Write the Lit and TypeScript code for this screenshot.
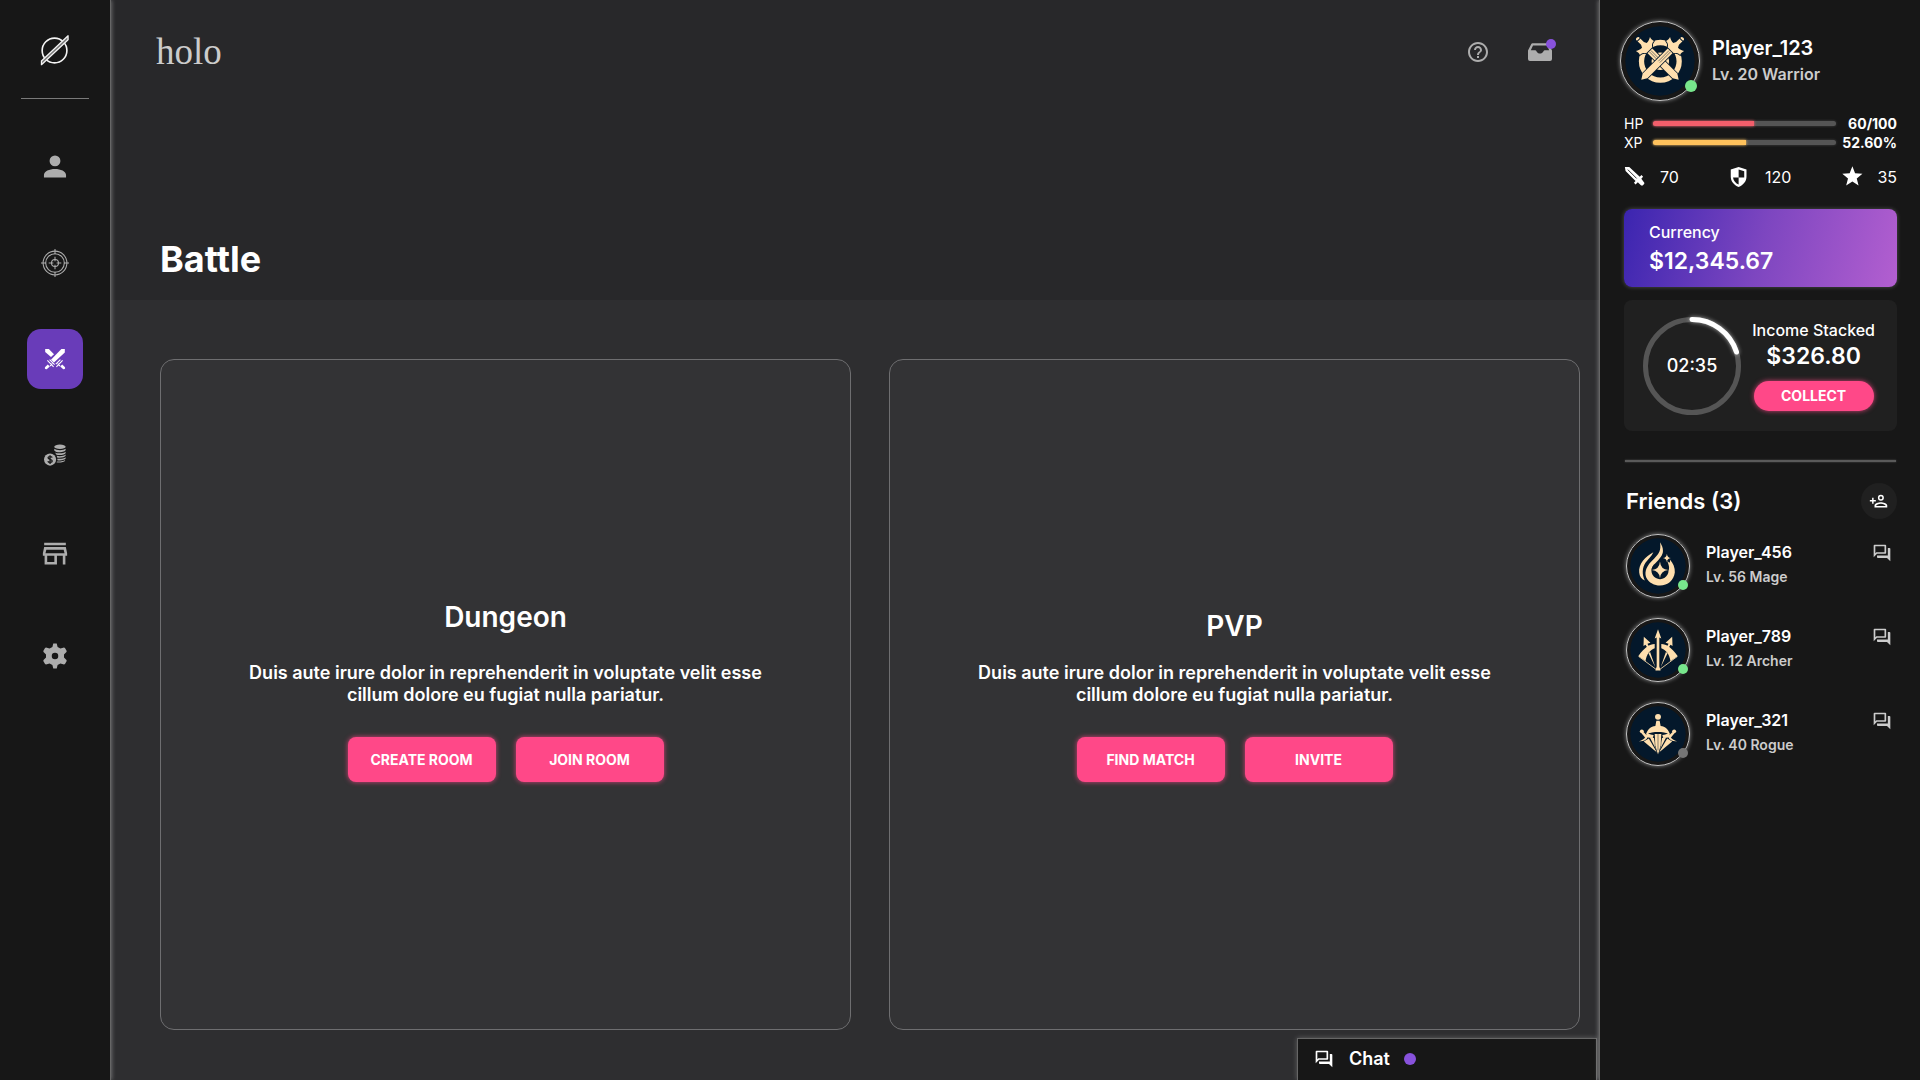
import { LitElement, html, css, svg, SVGTemplateResult } from "lit";
import { customElement, property } from "lit/decorators.js";
import { classMap } from "lit/directives/class-map.js";
import { styleMap } from "lit/directives/style-map.js";

/* ---------- icons (24 unit grid) ---------- */

const icons: Record<string, SVGTemplateResult> = {
  person: svg`<path d="M12 11.4a5 5 0 1 0 0-10 5 5 0 0 0 0 10zM1.8 21.6v-2.2c0-3.6 5-5.6 10.2-5.6s10.2 2 10.2 5.6v2.2z"/>`,
  target: svg`<g fill="none" stroke="currentColor" stroke-width=".9">
    <circle cx="12" cy="12" r="10.2"/><circle cx="12" cy="12" r="8"/><circle cx="12" cy="12" r="3"/>
    <path d="M12 0v4.4M12 19.6V24M0 12h4.4M19.6 12H24M12 6.6v4M12 13.4v4M6.6 12h4M13.4 12h4"/></g>`,
  swords: svg`<path d="M21.8 2v3.6L11 15.6 8 12.8 18.4 2z"/><path d="M2.2 2h3.6l5.2 5.2-3 2.8-5.8-5z"/>
    <path d="M2.2 20l2.6-2.6 2 2-2.8 2.6c-1.6.8-2.8-.6-1.8-2zM21.8 20l-2.6-2.6-2 2 2.8 2.6c1.6.8 2.8-.6 1.8-2z"/>
    <path d="M4.4 13.4l6.2 6.4M6.6 12.6l5 5M7 19l2.4-2.4M19.6 13.4l-6.2 6.4M17.4 12.6l-4.6 4.6M17 19l-2.4-2.4" fill="none" stroke="currentColor" stroke-width="1.1"/>`,
  coins: svg`<ellipse cx="17.4" cy="3" rx="6.2" ry="2.5"/>
    <path d="M11.2 5.2c2 2 10.4 2 12.4 0v1.4c-.6 2.8-10.4 3.4-12.4.4zM12 9.2c3 1.6 9.6 1.2 11.6-.8v1.4c-.6 2-6.4 3-10 1.8zM13.8 12.9c3.6.8 8 .2 9.8-1.4v1.4c-.8 1.6-5.4 2.6-9 2zM14.6 16.1c3.2.4 7.4-.2 9-1.6v1.4c-.8 1.6-5.2 2.4-9 1.8zM14.2 19c3.4.2 7.4-.4 8.8-1.6v.8c-.8 1.6-5.6 2.4-9.4 1.8z"/>
    <circle cx="6.6" cy="17" r="6.6"/>
    <path d="M9 14.8c-.6-1.4-4.6-1.6-4.6.3 0 2.2 4.6 1.2 4.6 3.5 0 2-4.2 2-4.8.2M6.6 12.2v9.6" fill="none" stroke="#171717" stroke-width="1.4"/>`,
  store: svg`<path d="M2 1.6h20v2.4H2zM2 5.6h20l1.2 5.8v2.2h-1.6v8.2h-2.4v-8.2h-5.4v8.2H2.4v-8.2H.8v-2.2zm2 2.4-.8 3.4h17.6L20 8zm.8 5.6v5.8h6.6v-5.8z" fill-rule="evenodd"/>`,
  gear: svg`<path d="M10.4.4h3.2l.8 3.2 2.6 1.5 3.3-1 .9.5 1.6 2.8-.2 1-2.3 2.2v2.8l2.3 2.2.2 1-1.6 2.8-.9.5-3.3-1-2.6 1.5-.8 3.2h-3.2l-.8-3.2L7 18.900l-3.300 1-.9-.5-1.600-2.800.2-1 2.300-2.200v-2.800L1.400 8.400l-.2-1 1.600-2.800.9-.5 3.300 1 2.600-1.500zM12 9a3 3 0 1 0 0 6 3 3 0 0 0 0-6z" fill-rule="evenodd"/>`,
  help: svg`<path d="M11 18h2v-2h-2v2zm1-16C6.480 2 2 6.480 2 12s4.480 10 10 10 10-4.480 10-10S17.520 2 12 2zm0 18c-4.410 0-8-3.590-8-8s3.590-8 8-8 8 3.590 8 8-3.590 8-8 8zm0-14c-2.210 0-4 1.790-4 4h2c0-1.100.9-2 2-2s2 .9 2 2c0 2-3 1.750-3 5h2c0-2.250 3-2.500 3-5 0-2.210-1.790-4-4-4z"/>`,
  inbox: svg`<path d="M4.400 3.200h15.200l1 .5L24 10.600v8.400a2 2 0 0 1-2 2H2a2 2 0 0 1-2-2v-8.400l3.400-6.900zM5 5.400l-2.200 4.800h4.600c1.200 0 1.300 3.400 4.600 3.400s3.400-3.400 4.600-3.400h4.600L19 5.400z" fill-rule="evenodd"/>`,
  sword: svg`<path d="M1 1h5l12 11.400 2-2 1.800 1.800-2 2.400 3.400 4.400v1.400l-1.800 1.800h-1.800l-3.800-3.600-2.600 2.400-1.800-1.800 1.800-2L1.800 5.600z"/><path d="M4.400 4.200l10 10" fill="none" stroke="#171717"/>`,
  shield: svg`<path d="M11 1 20 4v8c0 5.600-3.600 9.800-9 12-5.400-2.200-9-6.400-9-12V4zm0 3v9H4.600c.6 4 3 6.600 6.400 8.200V13h6.400V6z" fill-rule="evenodd"/>`,
  star: svg`<path d="M13 .4l3.100 7.900 8.400.5-6.500 5.400 2.100 8.200L13 17.800 5.900 22.400 8 14.200 1.500 8.800l8.400-.5z"/>`,
  addFriend: svg`<path d="M14.500 3.500a4 4 0 1 0 0 8 4 4 0 0 0 0-8zm0 2a2 2 0 1 1 0 4 2 2 0 0 1 0-4zM14.500 13.500c-2.900 0-8.500 1.400-8.500 4.200v2.800h17v-2.800c0-2.800-5.600-4.200-8.500-4.200zm-6.400 5c.2-1 3.300-3 6.400-3s6.200 2 6.400 3zM4.800 7.500h-2v3h-3v2h3v3h2v-3h3v-2h-3z"/>`,
  chat: svg`<path d="M15 4v7H5.170L4 12.170V4h11m1-2H3c-.55 0-1 .45-1 1v14l4-4h10c.55 0 1-.45 1-1V3c0-.55-.45-1-1-1zm5 4h-2v9H6v2c0 .55.45 1 1 1h11l4 4V7c0-.55-.45-1-1-1z"/>`,
  logo: svg`<circle cx="11.600" cy="12.400" r="10.600" fill="none" stroke="currentColor" stroke-width="1.400"/>
    <path d="M.4 24.600v-3.400L23.200-.200v3.600z" fill="#777"/><path d="M.4 21.400 23.200-.200M.4 24.600 23.200 3.200M.4 21v4M23.200-.600v4" fill="none" stroke="currentColor" stroke-width="1.100"/>`,
};

/* ---------- class crests (origin at the centre of the avatar) ---------- */

const blade = svg`
  <path d="M-10-54h20v118L0 80-10 64z"/>
  <path d="M-6-97q6-6 12 0v22l4 8c8 0 13-2 20-6-2 7-2 12 0 17-8 0-13 3-17 10h-26c-4-7-9-10-17-10 2-5 2-10 0-17 7 4 12 6 20 6l4-8z"/>
  <path d="M-7-91h14" fill="none" stroke="#04182b" stroke-width="3"/>
  <path d="M-3-42v46M3-42v46" fill="none" stroke="#04182b" stroke-width="1.500"/>`;

const fan = svg`
  <circle cx="-49" cy="-8" r="6"/>
  <path d="M-50-2l6-4 12 12-6 6z"/>
  <path d="M-58 22c8-2 12-4 17-9s7-12 8-18c4 6 12 8 20 8l-3 9c-8-1-14-2-17-1 0 5-9 11-25 11z"/>
  <path d="M-43 23l15-9L-3 56z"/><path d="M-25 10l13 2L-2 54z"/>`;

const crests: Record<string, SVGTemplateResult> = {
  warrior: svg`
    <circle cx="1" cy="1" r="57" fill="none" stroke="#ffdfae" stroke-width="16"/>
    <circle cx="1" cy="1" r="22" fill="none" stroke="#ffdfae" stroke-width="9" stroke-dasharray="24 10.500" stroke-dashoffset="12"/>
    <g stroke="#04182b" stroke-width="5" paint-order="stroke">
      <g transform="rotate(-45)">${blade}</g><g transform="rotate(45)">${blade}</g>
    </g>`,
  mage: svg`
    <path d="M6-72C10-48 4-38-12-22-34-2-42 16-36 34-28 52-10 59 6 59 30 59 48 44 51 20 52 4 46-8 36-20 38-8 34-8 28-16 32-4 36 4 32 14A26 26 0 1 1-8-8C4-20 16-34 15-46 15-56 12-62 6-72z"/>
    <path d="M-14-42C-38-30-60-6-57 20-56 32-50 40-40 44-49 24-48 6-38-10-30-22-20-28-14-42z"/>
    <path d="M6-14q2 24 25 26-23 2-25 25-2-23-25-25 23-2 25-26zM27-37q1 12 12 13-11 1-12 13-1-12-12-13 11-1 12-13z"/>`,
  archer: svg`
    <path d="M0-63 10-35 4-38 4 50 8 62H-8L-4 50-4-38-10-35z"/>
    ${[-1, 1].map(
      (side) => svg`<g transform="scale(${side} 1)">
        <path d="M43-40 44-12 38-16 32-7 27-10 32-19 23-22z"/>
        <path d="M10-18C26-18 40-8 60 19 52 23 46 28 38 34 34 12 24 0 10-5z"/>
        <path d="M24 6 29 10 8 52z"/>
        <path d="M58 20 4 60" fill="none" stroke="#ffdfae" stroke-width="2.500"/>
      </g>`
    )}`,
  rogue: svg`
    <g>${fan}</g><g transform="scale(-1 1)">${fan}</g>
    <path d="M-10 0H10L8 36 0 62-8 36z" stroke="#04182b" stroke-width="3" paint-order="stroke"/>
    <path d="M0-10V50" fill="none" stroke="#04182b" stroke-width="1.500"/>
    <circle cy="-52" r="9"/>
    <path d="M-5-40H5L8-24C22-24 32-12 37 2 24-5 12-6 0-6S-24-5-37 2C-32-12-22-24-8-24z"/>`,
};

@customElement("ui-icon")
class UiIcon extends LitElement {
  @property() name = "";
  static styles = css`
    :host {
      display: inline-flex;
      flex: none;
      width: var(--icon-size, 24px);
      height: var(--icon-size, 24px);
    }
    .icon {
      width: 100%;
      height: 100%;
      fill: currentColor;
      overflow: visible;
    }
  `;
  render() {
    return html`<svg class="icon" viewBox="0 0 24 24" aria-hidden="true">${icons[this.name]}</svg>`;
  }
}

@customElement("player-avatar")
class PlayerAvatar extends LitElement {
  @property() crest = "";
  @property({ type: Boolean }) online = false;
  static styles = css`
    :host {
      display: block;
      position: relative;
      flex: none;
      width: var(--avatar-size, 64px);
      height: var(--avatar-size, 64px);
    }
    .disc {
      display: block;
      box-sizing: border-box;
      width: 100%;
      height: 100%;
      border: 1px solid #c4c4c4;
      border-radius: 50%;
      box-shadow: 0 0 4px rgba(255, 255, 255, 0.5);
    }
    .field {
      fill: #04182b;
    }
    .art {
      fill: #ffdfae;
    }
    .dot {
      position: absolute;
      right: var(--dot-right, 2px);
      bottom: var(--dot-bottom, 8px);
      width: var(--dot-size, 10px);
      height: var(--dot-size, 10px);
      border-radius: 50%;
      background: #757575;
    }
    .online {
      background: #78e68c;
    }
  `;
  render() {
    const box = this.crest === "warrior" ? "-118 -118 236 236" : "-94 -94 188 188";
    const field = this.crest === "warrior" ? 105 : 84;
    return html`
      <svg class="disc" viewBox=${box} aria-hidden="true">
        <circle class="field" r=${field}></circle>
        <g class="art">${crests[this.crest]}</g>
      </svg>
      <span class=${classMap({ dot: true, online: this.online })}></span>
    `;
  }
}

const nav = [
  { icon: "person", label: "Profile" },
  { icon: "target", label: "Missions" },
  { icon: "swords", label: "Battle", active: true },
  { icon: "coins", label: "Income" },
  { icon: "store", label: "Store", tall: true },
  { icon: "gear", label: "Settings", tall: true },
];

const modes = [
  { title: "Dungeon", low: false, actions: ["CREATE ROOM", "JOIN ROOM"] },
  { title: "PVP", low: true, actions: ["FIND MATCH", "INVITE"] },
];

const bars = [
  { name: "HP", value: "60/100", fill: 55, color: "#f25e6b" },
  { name: "XP", value: "52.60%", fill: 51, color: "#ffc25c" },
];

const stats = [
  { icon: "sword", value: 70 },
  { icon: "shield", value: 120 },
  { icon: "star", value: 35 },
];

const friends = [
  { name: "Player_456", info: "Lv. 56 Mage", crest: "mage", online: true },
  { name: "Player_789", info: "Lv. 12 Archer", crest: "archer", online: true },
  { name: "Player_321", info: "Lv. 40 Rogue", crest: "rogue", online: false },
];

@customElement("app-root")
class AppRoot extends LitElement {
  static styles = css`
    :host {
      display: grid;
      grid-template-columns: 111px minmax(0, 1fr) 321px;
      min-height: 100vh;
      background: #171717;
      color: #fff;
      font-family: Inter, "Liberation Sans", sans-serif;
      font-size: 16px;
      font-weight: 500;
      line-height: 20px;
    }
    * {
      box-sizing: border-box;
    }
    h1,
    h2,
    p,
    ul {
      margin: 0;
      padding: 0;
    }
    button {
      display: flex;
      align-items: center;
      justify-content: center;
      padding: 0;
      border: 0;
      background: none;
      color: inherit;
      font: inherit;
      cursor: pointer;
    }

    /* left rail */
    .rail {
      display: flex;
      flex-direction: column;
      align-items: center;
      z-index: 1;
      border-right: 1px solid #666;
      box-shadow: 1px 0 4px rgba(255, 255, 255, 0.3);
      background: #171717;
    }
    .brand {
      display: flex;
      justify-content: center;
      width: 68px;
      height: 99px;
      padding-top: 36px;
      border-bottom: 1px solid #7a7a7a;
      color: #f4f4f4;
      --icon-size: 28px;
    }
    .nav {
      display: flex;
      flex-direction: column;
      gap: 36px;
      margin-top: 38px;
    }
    .nav-link {
      display: flex;
      align-items: center;
      justify-content: center;
      width: 56px;
      height: 60px;
      border-radius: 14px;
      color: #adadad;
      --icon-size: 26px;
    }
    .nav-link.tall {
      height: 66px;
    }
    .nav-link.target {
      --icon-size: 28px;
    }
    .nav-link.coins {
      --icon-size: 22px;
    }
    .nav-link.active {
      background: #693cb9;
      color: #fff;
      --icon-size: 24px;
    }

    /* centre */
    .main {
      display: flex;
      flex-direction: column;
      position: relative;
      background: #2e2e30;
    }
    .hero {
      display: flex;
      flex-direction: column;
      justify-content: space-between;
      height: 300px;
      padding: 32px 47px 20px 45px;
      background: #28282a;
    }
    .topbar {
      display: flex;
      align-items: center;
      justify-content: space-between;
    }
    .wordmark {
      color: #ccc;
      font-family: "Liberation Serif", serif;
      font-size: 37px;
      font-weight: 400;
      line-height: 40px;
      text-decoration: none;
    }
    .tools {
      display: flex;
      gap: 38px;
      color: #adadad;
    }
    .inbox {
      position: relative;
    }
    .alert {
      position: absolute;
      top: -1px;
      right: -4px;
      width: 10px;
      height: 10px;
      border-radius: 50%;
      background: #8852dc;
    }
    .title {
      padding-left: 4px;
      font-size: 36px;
      font-weight: 700;
      line-height: 42px;
    }
    .modes {
      display: grid;
      flex: 1;
      grid-template-columns: 1fr 1fr;
      gap: 38px;
      padding: 59px 19px 50px 49px;
    }
    .mode {
      display: flex;
      flex-direction: column;
      align-items: center;
      justify-content: center;
      padding: 0 40px 8px;
      border: 1px solid #6e6e70;
      border-radius: 14px;
      background: #333335;
      text-align: center;
    }
    .mode-title {
      padding-bottom: 27px;
      font-size: 28px;
      font-weight: 600;
      line-height: 36px;
    }
    .mode-title.low {
      padding: 9px 0 18px;
    }
    .mode-text {
      max-width: 540px;
      font-size: 18px;
      font-weight: 600;
      line-height: 22px;
    }
    .actions {
      display: flex;
      gap: 20px;
      margin-top: 31px;
    }
    .action {
      background: #ff4888;
      font-size: 14px;
      font-weight: 700;
      box-shadow: 0 0 5px rgba(255, 72, 136, 0.8);
    }
    .actions .action {
      width: 148px;
      height: 45px;
      border-radius: 8px;
    }
    .chat {
      display: flex;
      align-items: center;
      justify-content: flex-start;
      position: absolute;
      right: 2px;
      bottom: 0;
      width: 300px;
      height: 42px;
      padding: 0 0 2px 16px;
      border: 1px solid #666;
      border-bottom: 0;
      box-shadow: 0 0 5px rgba(255, 255, 255, 0.25);
      background: #171717;
      font-size: 18px;
      --icon-size: 20px;
    }
    .chat-label {
      margin: 0 14px 0 15px;
      font-weight: 600;
    }
    .chat-dot {
      width: 12px;
      height: 12px;
      border-radius: 50%;
      background: #8852dc;
    }

    /* right panel */
    .panel {
      display: flex;
      flex-direction: column;
      z-index: 1;
      padding: 21px 23px 0 24px;
      border-left: 1px solid #666;
      box-shadow: -1px 0 4px rgba(255, 255, 255, 0.3);
      background: #171717;
    }
    .profile {
      display: flex;
      align-items: center;
      gap: 12px;
      margin-left: -4px;
      --avatar-size: 80px;
      --dot-size: 12px;
      --dot-right: 3px;
      --dot-bottom: 9px;
    }
    .profile-name {
      font-size: 20px;
      font-weight: 600;
      line-height: 26px;
    }
    .profile-info {
      color: #ccc;
      font-weight: 600;
      line-height: 26px;
    }
    .bars {
      display: grid;
      margin-top: 13px;
      font-size: 14px;
      font-weight: 400;
      line-height: 19px;
    }
    .bar-row {
      display: grid;
      grid-template-columns: 29px 183px 1fr;
      align-items: center;
    }
    .track {
      height: 5px;
      border-radius: 3px;
      background: #555;
      box-shadow: 0 0 3px rgba(255, 255, 255, 0.2);
    }
    .fill {
      height: 5px;
      border-radius: 3px 0 0 3px;
    }
    .bar-value {
      font-weight: 700;
      text-align: right;
    }
    .stats {
      display: flex;
      justify-content: space-between;
      margin-top: 14px;
      --icon-size: 21px;
    }
    .stat {
      display: flex;
      align-items: center;
      gap: 15px;
      font-weight: 400;
    }
    .currency {
      margin-top: 22px;
      padding: 13px 25px 12px;
      border-radius: 8px;
      background: linear-gradient(105deg, #3b25b0, #7d46c0 50%, #b35fd0);
      box-shadow: 0 0 4px rgba(255, 255, 255, 0.25);
    }
    .amount {
      font-size: 23px;
      font-weight: 600;
      line-height: 28px;
    }
    .currency .amount {
      padding-top: 5px;
    }
    .income {
      display: flex;
      align-items: center;
      justify-content: space-between;
      margin-top: 13px;
      padding: 17px 22px 16px 19px;
      border-radius: 8px;
      background: #202020;
    }
    .timer {
      display: grid;
      place-items: center;
      font-size: 18px;
    }
    .timer > * {
      grid-area: 1 / 1;
    }
    .ring {
      width: 98px;
      height: 98px;
      fill: none;
      stroke: #555;
      stroke-width: 5;
      overflow: visible;
    }
    .arc {
      stroke: #fff;
      stroke-linecap: round;
      filter: drop-shadow(0 0 2px rgba(255, 255, 255, 0.6));
    }
    .collect {
      display: flex;
      flex-direction: column;
      align-items: center;
      padding-bottom: 2px;
    }
    .collect .amount {
      padding-top: 2px;
    }
    .collect .action {
      width: 120px;
      height: 30px;
      margin-top: 11px;
      border-radius: 15px;
    }
    .rule {
      height: 2px;
      margin: 29px 1px 0;
      background: #5a5a5a;
      box-shadow: 0 0 2px #5a5a5a;
    }
    .friends-head {
      display: flex;
      align-items: center;
      justify-content: space-between;
      margin-top: 21px;
      padding-left: 2px;
    }
    .friends-title {
      font-size: 22px;
      font-weight: 600;
      line-height: 28px;
    }
    .add {
      width: 36px;
      height: 36px;
      border-radius: 50%;
      background: #202020;
      --icon-size: 18px;
    }
    .friends {
      display: grid;
      gap: 20px;
      margin-top: 15px;
      padding: 0 5px 0 2px;
      list-style: none;
    }
    .friend {
      display: flex;
      gap: 16px;
    }
    .friend-text {
      flex: 1;
      padding-top: 6px;
    }
    .friend-name {
      font-weight: 600;
      line-height: 25px;
    }
    .friend-info {
      color: #ccc;
      font-size: 14px;
      font-weight: 600;
      line-height: 24px;
    }
    .message {
      width: 20px;
      height: 20px;
      margin-top: 9px;
      color: #ccc;
      --icon-size: 20px;
    }
  `;

  render() {
    return html`
      <aside class="rail">
        <div class="brand"><ui-icon name="logo"></ui-icon></div>
        <nav class="nav" aria-label="Main">
          ${nav.map(
            (n) => html`<a
              href="#${n.label}"
              aria-label=${n.label}
              class=${classMap({ "nav-link": true, [n.icon]: true, tall: !!n.tall, active: !!n.active })}
              ><ui-icon name=${n.icon}></ui-icon
            ></a>`
          )}
        </nav>
      </aside>

      <main class="main">
        <header class="hero">
          <div class="topbar">
            <a class="wordmark" href="#home">holo</a>
            <div class="tools">
              <button aria-label="Help"><ui-icon name="help"></ui-icon></button>
              <button class="inbox" aria-label="Inbox">
                <ui-icon name="inbox"></ui-icon><span class="alert"></span>
              </button>
            </div>
          </div>
          <h1 class="title">Battle</h1>
        </header>
        <div class="modes">
          ${modes.map(
            (m) => html`<section class="mode">
              <h2 class=${classMap({ "mode-title": true, low: m.low })}>${m.title}</h2>
              <p class="mode-text">
                Duis aute irure dolor in reprehenderit in voluptate velit esse cillum dolore eu fugiat nulla pariatur.
              </p>
              <div class="actions">${m.actions.map((a) => html`<button class="action">${a}</button>`)}</div>
            </section>`
          )}
        </div>
        <button class="chat">
          <ui-icon name="chat"></ui-icon><span class="chat-label">Chat</span><span class="chat-dot"></span>
        </button>
      </main>

      <aside class="panel">
        <div class="profile">
          <player-avatar crest="warrior" online></player-avatar>
          <div>
            <p class="profile-name">Player_123</p>
            <p class="profile-info">Lv. 20 Warrior</p>
          </div>
        </div>
        <div class="bars">
          ${bars.map(
            (b) => html`<div class="bar-row">
              <span>${b.name}</span>
              <div class="track">
                <div class="fill" style=${styleMap({ width: b.fill + "%", background: b.color, boxShadow: `0 0 3px ${b.color}` })}></div>
              </div>
              <span class="bar-value">${b.value}</span>
            </div>`
          )}
        </div>
        <div class="stats">
          ${stats.map((s) => html`<div class="stat"><ui-icon name=${s.icon}></ui-icon><span>${s.value}</span></div>`)}
        </div>
        <section class="currency">
          <p>Currency</p>
          <p class="amount">$12,345.67</p>
        </section>
        <section class="income">
          <div class="timer">
            <svg class="ring" viewBox="0 0 98 98" aria-hidden="true">
              <circle cx="49" cy="49" r="46.500"></circle>
              <path class="arc" d="M49 2.500A46.500 46.500 0 0 1 93.500 35"></path>
            </svg>
            <span>02:35</span>
          </div>
          <div class="collect">
            <p>Income Stacked</p>
            <p class="amount">$326.80</p>
            <button class="action">COLLECT</button>
          </div>
        </section>
        <div class="rule"></div>
        <div class="friends-head">
          <h2 class="friends-title">Friends (3)</h2>
          <button class="add" aria-label="Add friend"><ui-icon name="addFriend"></ui-icon></button>
        </div>
        <ul class="friends">
          ${friends.map(
            (f) => html`<li class="friend">
              <player-avatar crest=${f.crest} ?online=${f.online}></player-avatar>
              <div class="friend-text">
                <p class="friend-name">${f.name}</p>
                <p class="friend-info">${f.info}</p>
              </div>
              <button class="message" aria-label="Message ${f.name}"><ui-icon name="chat"></ui-icon></button>
            </li>`
          )}
        </ul>
      </aside>
    `;
  }
}
